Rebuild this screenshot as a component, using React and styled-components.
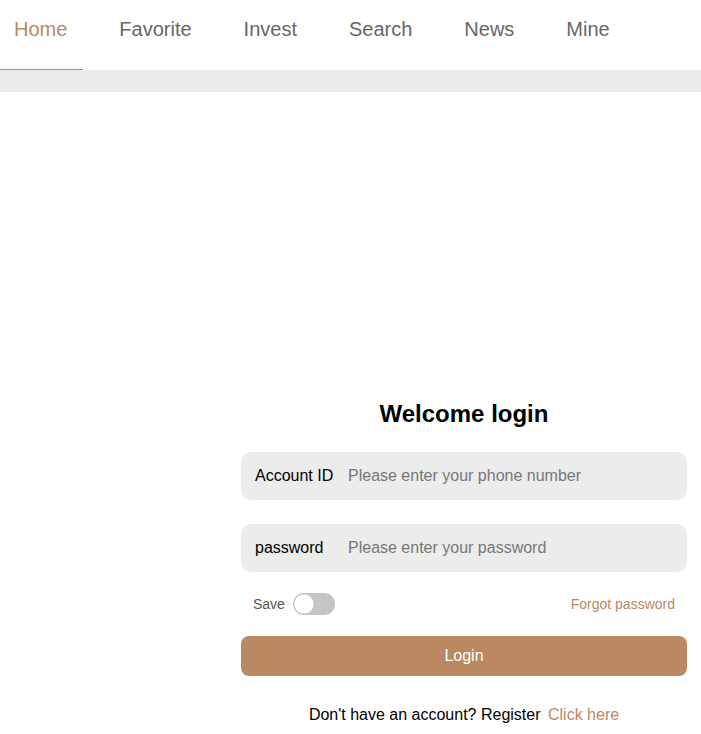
import React, { useState } from 'react';
import styled, { createGlobalStyle } from 'styled-components';

const GlobalStyle = createGlobalStyle`
  body {
    margin: 0;
    background: #fff;
    font-family: "Liberation Sans", Arial, sans-serif;
  }
`;

const BRAND = '#ba8961';

const Nav = styled.nav`
  display: flex;
  height: 70px;
  gap: 21px;
  background: #fff;
`;

const Tab = styled.div`
  height: 70px;
  box-sizing: border-box;
  padding: 18px 16px 0 15px;
  font-size: 20px;
  line-height: 22px;
  color: ${p => (p.$active ? BRAND : '#666')};
  border-bottom: 1px solid ${p => (p.$active ? BRAND : 'transparent')};
  &:first-child {
    padding-left: 14px;
  }
`;

const Strip = styled.div`
  height: 22px;
  background: #ececec;
`;

const Main = styled.main`
  display: flex;
  justify-content: flex-end;
  padding: 307px 14px 0 0;
`;

const Form = styled.div`
  width: 446px;
  display: flex;
  flex-direction: column;
`;

const Title = styled.h2`
  margin: 0 0 23px;
  font-size: 24px;
  line-height: 30px;
  font-weight: bold;
  text-align: center;
  color: #000;
`;

const Field = styled.label`
  display: flex;
  align-items: center;
  height: 48px;
  padding: 0 14px;
  margin-bottom: 24px;
  border-radius: 10px;
  background: #ececec;
`;

const FieldLabel = styled.span`
  width: 93px;
  flex-shrink: 0;
  font-size: 16px;
  color: #000;
`;

const Input = styled.input`
  flex: 1;
  min-width: 0;
  border: none;
  outline: none;
  background: transparent;
  padding: 0;
  font-family: inherit;
  font-size: 16px;
  color: #000;
  &::placeholder {
    color: #777;
  }
`;

const OptionsRow = styled.div`
  display: flex;
  align-items: center;
  justify-content: space-between;
  height: 24px;
  margin: -4px 12px 20px 12px;
`;

const SaveBox = styled.div`
  display: flex;
  align-items: center;
  gap: 8px;
  font-size: 14px;
  color: #555;
`;

const Toggle = styled.button`
  position: relative;
  width: 42px;
  height: 22px;
  padding: 0;
  border: none;
  border-radius: 11px;
  background: ${p => (p.$on ? BRAND : '#c5c5c5')};
  cursor: pointer;
`;

const Knob = styled.span`
  position: absolute;
  top: 1px;
  left: ${p => (p.$on ? '21px' : '1px')};
  width: 20px;
  height: 20px;
  border-radius: 50%;
  background: #fff;
  box-shadow: 0 0 1px rgba(0, 0, 0, 0.4);
`;

const Link = styled.a`
  font-size: ${p => p.$size || 14}px;
  color: ${BRAND};
  text-decoration: none;
  cursor: pointer;
`;

const ClickHere = styled(Link)`
  margin-left: 3px;
`;

const LoginButton = styled.button`
  height: 40px;
  border: none;
  border-radius: 8px;
  background: ${BRAND};
  color: #fff;
  font-family: inherit;
  font-size: 16px;
  cursor: pointer;
`;

const Footer = styled.p`
  margin: 30px 0 0;
  text-align: center;
  font-size: 16px;
  color: #000;
  line-height: 18px;
`;

const tabs = ['Home', 'Favorite', 'Invest', 'Search', 'News', 'Mine'];

export default function App() {
  const [save, setSave] = useState(false);

  return (
    <>
      <GlobalStyle />
      <Nav>
        {tabs.map((t, i) => (
          <Tab key={t} $active={i === 0}>{t}</Tab>
        ))}
      </Nav>
      <Strip />
      <Main>
        <Form>
          <Title>Welcome login</Title>
          <Field>
            <FieldLabel>Account ID</FieldLabel>
            <Input placeholder="Please enter your phone number" />
          </Field>
          <Field>
            <FieldLabel>password</FieldLabel>
            <Input type="password" placeholder="Please enter your password" />
          </Field>
          <OptionsRow>
            <SaveBox>
              Save
              <Toggle $on={save} onClick={() => setSave(!save)}>
                <Knob $on={save} />
              </Toggle>
            </SaveBox>
            <Link>Forgot password</Link>
          </OptionsRow>
          <LoginButton>Login</LoginButton>
          <Footer>
            Don't have an account? Register<ClickHere $size={16}> Click here</ClickHere>
          </Footer>
        </Form>
      </Main>
    </>
  );
}
